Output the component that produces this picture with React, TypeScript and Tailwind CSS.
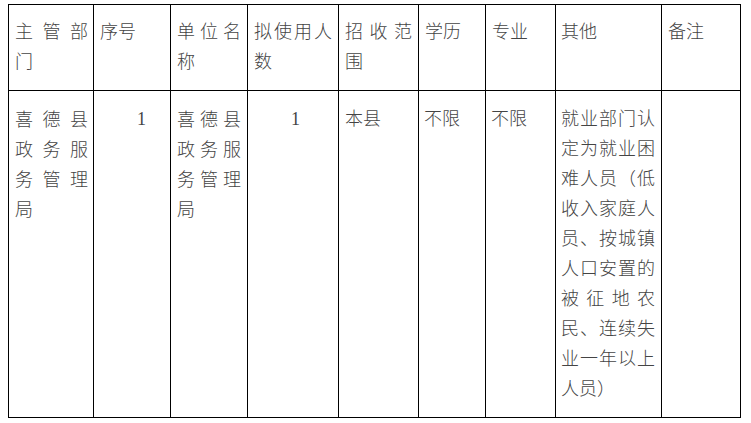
import React from "react";

type Line = { text: string; spread?: boolean };

const header: Line[][] = [
  [{ text: "主管部", spread: true }, { text: "门" }],
  [{ text: "序号" }],
  [{ text: "单位名", spread: true }, { text: "称" }],
  [{ text: "拟使用人", spread: true }, { text: "数" }],
  [{ text: "招收范", spread: true }, { text: "围" }],
  [{ text: "学历" }],
  [{ text: "专业" }],
  [{ text: "其他" }],
  [{ text: "备注" }],
];

const dept: Line[] = [
  { text: "喜德县", spread: true },
  { text: "政务服", spread: true },
  { text: "务管理", spread: true },
  { text: "局" },
];

const other: Line[] = [
  { text: "就业部门认", spread: true },
  { text: "定为就业困", spread: true },
  { text: "难人员（低", spread: true },
  { text: "收入家庭人", spread: true },
  { text: "员、按城镇", spread: true },
  { text: "人口安置的", spread: true },
  { text: "被征地农", spread: true },
  { text: "民、连续失", spread: true },
  { text: "业一年以上", spread: true },
  { text: "人员）" },
];

const Lines: React.FC<{ lines: Line[] }> = ({ lines }) => (
  <>
    {lines.map((l, i) => (
      <div
        key={i}
        className={l.spread ? "text-justify [text-align-last:justify]" : ""}
      >
        {l.text}
      </div>
    ))}
  </>
);

const App: React.FC = () => {
  const cell = "border-r border-b border-black";

  return (
    <div className="w-[751px] h-[423px] bg-white pt-[4px] pl-[8px] overflow-hidden">
      <div
        className="grid grid-cols-[85px_77px_77px_91px_80px_67px_70px_106px_79px] grid-rows-[86px_327px] w-[733px] border-l border-t border-black text-[18px] leading-[30px] font-light text-[#444]"
        style={{ fontFamily: '"Liberation Serif", "Noto Sans CJK SC", serif' }}
      >
        {/* header row */}
        {header.map((lines, i) => {
          const pad =
            i === 0
              ? "pl-[6px] pr-[5px]"
              : i === 7
                ? "pl-[5px] pr-[6px]"
                : "pl-[6px] pr-[6px]";
          return (
            <div key={i} className={`${cell} ${pad} pt-[12px]`}>
              <Lines lines={lines} />
            </div>
          );
        })}

        {/* body row */}
        <div className={`${cell} pl-[6px] pr-[5px] pt-[14px]`}>
          <Lines lines={dept} />
        </div>
        <div className={`${cell} pl-[43px] pt-[13px]`}>1</div>
        <div className={`${cell} pl-[6px] pr-[6px] pt-[14px]`}>
          <Lines lines={dept} />
        </div>
        <div className={`${cell} pl-[43px] pt-[13px]`}>1</div>
        <div className={`${cell} pl-[6px] pt-[13px]`}>本县</div>
        <div className={`${cell} pl-[5px] pt-[13px]`}>不限</div>
        <div className={`${cell} pl-[5px] pt-[13px]`}>不限</div>
        <div className={`${cell} pl-[5px] pr-[6px] pt-[13px]`}>
          <Lines lines={other} />
        </div>
        <div className={cell}></div>
      </div>
    </div>
  );
};

export default App;
